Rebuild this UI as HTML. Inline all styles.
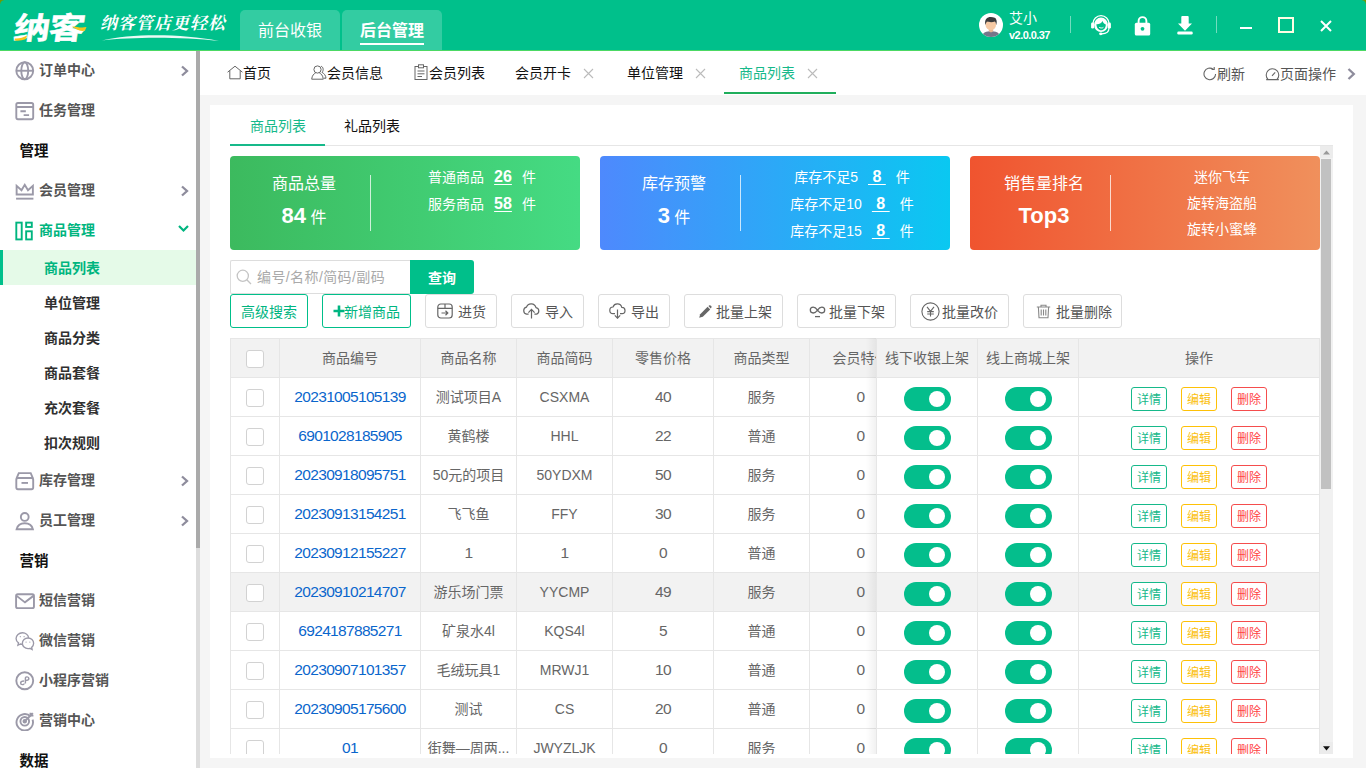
<!DOCTYPE html>
<html lang="zh-CN">
<head>
<meta charset="utf-8">
<title>纳客 - 商品列表</title>
<style>
*{box-sizing:border-box;margin:0;padding:0}
html,body{width:1366px;height:768px;overflow:hidden;background:#f5f5f5}
body{font-family:"Liberation Sans","Noto Sans CJK SC",sans-serif;font-size:14px;color:#333;position:relative}
.abs{position:absolute}
/* header */
#hd{position:absolute;left:0;top:0;width:1366px;height:51px;background:#00c08b;border-bottom:1px solid #4cd964}
#logo{position:absolute;left:14px;top:6px;font-size:30.5px;font-weight:700;-webkit-text-stroke:.5px #fff;color:#fff;letter-spacing:-1px;line-height:44px;white-space:nowrap;transform-origin:0 50%;transform:scaleX(1.19) skewX(-7deg)}
#slogan{position:absolute;left:100px;top:11px;font-family:"Liberation Serif","Noto Serif CJK SC",serif;font-style:italic;font-weight:700;font-size:17px;letter-spacing:1px;color:#fff;line-height:26px;white-space:nowrap}
.htab{position:absolute;top:10px;height:40px;width:100px;background:rgba(255,255,255,.2);border-radius:5px 5px 0 0;color:#fff;font-size:16px;line-height:42px;text-align:center}
.htab u{text-decoration:none;display:inline-block;line-height:22px;padding-bottom:1px;border-bottom:2px solid #fff}
#user{position:absolute;left:1009px;top:8px;color:#fff;line-height:20px}
#user b{display:block;font-size:11px;letter-spacing:-.55px;line-height:15px;margin-top:0}
.vsep{position:absolute;top:16px;width:1px;height:17px;background:rgba(255,255,255,.45)}
/* sidebar */
#sb{position:absolute;left:0;top:51px;width:196px;height:717px;background:#fff;overflow:hidden}
#sbbar{position:absolute;left:196px;top:51px;width:4px;height:717px;background:#ddd}
#sbbar i{position:absolute;left:0;top:0;width:4px;height:497px;background:#aaa}
.mi{position:absolute;left:0;width:196px;height:40px;line-height:40px;padding-left:39px;font-weight:bold;color:#555;font-size:14px}
.mi svg{position:absolute}
.mi svg:not(.chev){left:15px;top:11px;width:19.5px;height:19.5px}
.mi .chev{position:absolute;left:180px;top:13.5px}
.mh{position:absolute;left:19.5px;height:40px;line-height:42px;font-weight:bold;color:#111;font-size:14.5px}
.si{position:absolute;left:0;width:196px;height:35px;line-height:37px;padding-left:44px;font-weight:bold;color:#303030;font-size:14px}
.si.on{background:#e5fae8;color:#00b57f;border-left:3px solid #00c08b;padding-left:41px}

/* tab bar */
#tb{position:absolute;left:200px;top:51px;width:1166px;height:44px;background:#fff}
.tab{position:absolute;top:0;height:44px;line-height:45px;font-size:14px;color:#111;white-space:nowrap}
.tab svg{position:absolute}
.tab.on{color:#16b98a}
.tx{position:absolute;top:17px;width:11px;height:11px}
#tabline{position:absolute;left:524px;top:41px;width:112px;height:2px;background:#1fae5c}
.tab.tr{color:#555;line-height:46px}
/* main card */
#card{position:absolute;left:210px;top:105px;width:1143px;height:653px;background:#fff}
.it{position:absolute;top:0;height:41px;line-height:43px;font-size:14px;color:#111}
#itline{position:absolute;left:20px;top:40px;width:1103px;height:1px;background:#e6e6e6}
#iton{position:absolute;left:20px;top:39px;width:95px;height:2px;background:#16b98a}
#scroll{position:absolute;left:20px;top:41px;width:1090px;height:608px;overflow:hidden}
#vs{position:absolute;left:1110px;top:41px;width:13px;height:608px;background:#f1f1f1}
#vs:before,#vs:after{content:"";position:absolute;left:0;width:13px;height:12px;background:#ececec}
#vs:before{top:0}#vs:after{bottom:0}
#vs i{position:absolute;left:1px;top:13px;width:10px;height:330px;background:#c1c1c1}
/* stat */
.st{position:absolute;top:10px;width:350px;height:94px;border-radius:4px;color:#fff}
.st .t{position:absolute;left:4px;width:140px;text-align:center;top:14px;font-size:16px;line-height:28px}
.st .n{position:absolute;left:4px;width:140px;text-align:center;top:44px;font-size:16px;line-height:32px}
.st .n b{font-size:22px}
.st .dv{position:absolute;left:140px;top:19px;width:1px;height:56px;background:rgba(255,255,255,.75)}
.st .r{position:absolute;left:152px;width:200px;text-align:center;font-size:14px;line-height:20px;white-space:nowrap}
.st .r b{font-size:16px;text-decoration:underline;margin:0 10px;text-underline-offset:2px}
.st .r b.w{margin:0 10px}
/* search */
#sin{position:absolute;left:0;top:114px;width:180px;height:34px;border:1px solid #ddd;border-right:0;border-radius:2px 0 0 2px;padding-left:26px;line-height:33px;color:#aaa;font-size:14px;white-space:nowrap;letter-spacing:.4px}
#sbtn{position:absolute;left:180px;top:114px;width:64px;height:34px;background:#00bf8a;border-radius:0 3px 3px 0;color:#fff;text-align:center;line-height:37px;font-size:14px;font-weight:bold}
.bt{position:absolute;top:148px;height:34px;border:1px solid #ddd;border-radius:3px;background:#fff;color:#555;font-size:14px;line-height:35px;white-space:nowrap}
.bt.g{border-color:#00bf8a;color:#00b581}
.bt span{position:absolute;top:0}
.bt svg{position:absolute}

/* table */
#tbl{position:absolute;left:0;top:192px;border-collapse:separate;border-spacing:0;table-layout:fixed;width:682px;border-top:1px solid #e6e6e6;border-left:1px solid #e6e6e6;font-size:14px;color:#666}
#tbl td,#tbl th,#fx td,#fx th{height:39px;border-right:1px solid #e6e6e6;border-bottom:1px solid #e6e6e6;text-align:center;font-weight:normal;white-space:nowrap;overflow:hidden;padding:0;line-height:38px}
#tbl th,#fx th{background:#f2f2f2}
#tbl tr.hv td,#fx tr.hv td{background:#f2f2f2}
#tbl a{color:#0a66cc;text-decoration:none}
#tbl .n{font-size:15.5px;letter-spacing:-.67px}
.cb{display:inline-block;width:18px;height:18px;border:1px solid #d2d2d2;border-radius:3px;background:#fff;vertical-align:middle;margin-top:-1px}
#fx{position:absolute;left:646px;top:192px;border-collapse:separate;border-spacing:0;table-layout:fixed;width:444px;border-top:1px solid #e6e6e6;border-left:1px solid #e6e6e6;font-size:14px;color:#666;background:#fff}
#fxs{position:absolute;left:636px;top:192px;width:10px;height:420px;background:linear-gradient(90deg,rgba(0,0,0,0),rgba(0,0,0,.055))}
.sw{display:inline-block;width:47px;height:24px;border-radius:12px;background:#04be8c;position:relative;vertical-align:middle;margin-top:1px}
.sw i{position:absolute;left:25px;top:4px;width:16px;height:16px;border-radius:50%;background:#fff}
.ob{display:inline-block;width:36px;height:24px;border:1px solid;border-radius:3px;font-size:12px;line-height:25px;vertical-align:middle;margin:1px 7px 0;background:#fff}
.ob.a{color:#16b98a;border-color:#16b98a}.ob.b{color:#fbbf10;border-color:#fec107}.ob.c{color:#f44;border-color:#f54d4d}
</style>
</head>
<body>
<div id="hd">
  <div id="logo">纳客</div>
  <svg class="abs" style="left:14px;top:24px" width="74" height="18" viewBox="0 0 74 18"><path d="M1 14.5C5 14.8 9 13.8 13 11.5L12 15C8 16.8 4 16.8 0.5 16.5Z" fill="#f6c51c"/><path d="M58 2.5C62 2 66 4.5 72.5 3L71 6.5C66 8 62 5 58 2.5Z" fill="#f6c51c"/></svg>
  <div id="slogan">纳客管店更轻松</div>
  <svg class="abs" style="left:101px;top:34px" width="120" height="8" viewBox="0 0 120 8"><path d="M1 6.5C30 -.5 80 -.5 118 7C80 2.6 30 3 1 6.5Z" fill="#fff" opacity=".92"/></svg>
  <div class="htab" style="left:240px">前台收银</div>
  <div class="htab" style="left:342px;font-weight:bold"><u>后台管理</u></div>
  <div id="user">艾小<b>v2.0.0.37</b></div>

  <svg class="abs" style="left:979px;top:13px" width="24" height="24" viewBox="0 0 24 24"><defs><clipPath id="avc"><circle cx="12" cy="12" r="12"/></clipPath></defs><circle cx="12" cy="12" r="12" fill="#fff"/><g clip-path="url(#avc)"><path d="M2.5 26C2.5 19.5 7 18.2 12 18.2S21.5 19.5 21.5 26Z" fill="#76768a"/><path d="M9.8 15H14.2V18.3L12 19.6L9.8 18.3Z" fill="#eab894"/><ellipse cx="11.8" cy="11.6" rx="5.3" ry="5.6" fill="#f6c9a4"/><path d="M6.4 12C5.2 6.5 8 4 11.8 4C15 4 17.2 5 17.2 6.6C18 8 17.8 10.4 17.2 12C16.8 10.4 16.6 9.2 15.8 8.6C13.5 9.6 9.5 9.2 8 8.6C7.2 9.4 6.8 10.6 6.4 12Z" fill="#3a3a3c"/></g></svg>
  <svg class="abs" style="left:1090px;top:14px" width="22" height="22" viewBox="0 0 22 22" fill="none"><path d="M3 11V9.6A8 8 0 0 1 19 9.6V11" stroke="#fff" stroke-width="1.3"/><ellipse cx="11" cy="10.8" rx="6.9" ry="7.3" fill="#fff"/><path d="M6.4 10.2C8.4 10.6 11.2 9.4 12.6 7C13 8.6 14.4 10 15.8 10.4C15.8 13.8 14 16.2 11.2 16.2S6.5 13.6 6.4 10.2Z" fill="#00c08b"/><path d="M9.2 13.3C10 14.2 12.6 14.2 13.4 13.3" stroke="#fff" stroke-width="1"/><rect x="1.1" y="8.6" width="3" height="6" rx="1.4" fill="#fff"/><rect x="17.9" y="8.6" width="3" height="6" rx="1.4" fill="#fff"/><path d="M19 14C19 18 15.6 19.8 11.6 19.8" stroke="#fff" stroke-width="1.2"/><ellipse cx="10.8" cy="19.8" rx="1.7" ry="1.4" fill="#fff"/></svg>
  <svg class="abs" style="left:1134px;top:15px" width="17" height="21" viewBox="0 0 17 21"><path d="M4.6 9V6A3.9 3.9 0 0 1 12.4 6V9" fill="none" stroke="#fff" stroke-width="1.9"/><rect x=".8" y="7.8" width="15.4" height="12.8" rx="1.6" fill="#fff"/><circle cx="8.5" cy="13.8" r="1.9" fill="#00c08b"/></svg>
  <svg class="abs" style="left:1177px;top:16px" width="16" height="19" viewBox="0 0 16 19"><path d="M4.3 1Q4.3 0 5.3 0H10.7Q11.7 0 11.7 1V7.5H15L8 14.8L1 7.5H4.3Z" fill="#fff"/><rect x=".3" y="15.6" width="15.4" height="2.9" rx="1.2" fill="#fff"/></svg>
  <div class="abs" style="left:1240px;top:27px;width:12px;height:2px;background:#fff"></div>
  <div class="abs" style="left:1278px;top:17px;width:16px;height:16px;border:2px solid #fffde3"></div>
  <svg class="abs" style="left:1320px;top:20px" width="12" height="12" viewBox="0 0 12 12"><path d="M1 1L11 11M11 1L1 11" stroke="#fff" stroke-width="2" fill="none"/></svg>
  <div class="vsep" style="left:1070px"></div>
  <div class="vsep" style="left:1216px"></div>
</div>
<div class="abs" style="left:1362px;top:0;width:4px;height:4px;background:radial-gradient(circle at 0 100%,rgba(0,0,0,0) 3.2px,#6f9a05 4.2px)"></div>
<div class="abs" style="left:0;top:0;width:4px;height:4px;background:radial-gradient(circle at 100% 100%,rgba(0,0,0,0) 3.2px,#6f9a05 4.2px)"></div>
<div id="sb">
<div class="mi" style="top:-1px"><svg width="18" height="18" viewBox="0 0 18 18" fill="none" stroke="#9b99a8" stroke-width="1.75"><circle cx="9" cy="9" r="7.8" /><ellipse cx="9" cy="9" rx="3.2" ry="7.8"/><path d="M1.2 9H16.8"/></svg>订单中心<svg class="chev" width="9" height="14" viewBox="0 0 9 14"><path d="M2 2.5 L7 7 L2 11.5" fill="none" stroke="#8e8c9c" stroke-width="2.3"/></svg></div>
<div class="mi" style="top:39px"><svg width="18" height="18" viewBox="0 0 18 18" fill="none" stroke="#9b99a8" stroke-width="1.75"><rect x="1.2" y="1.8" width="15.6" height="15" rx="1.5"/><path d="M1.2 5.6H16.8M5 9.4H10M8 13H13" /></svg>任务管理</div>
<div class="mh" style="top:79px">管理</div>
<div class="mi" style="top:119px"><svg width="18" height="18" viewBox="0 0 18 18" fill="none" stroke="#9b99a8" stroke-width="1.75"><path d="M1.5 12.5V4.5L6 8.5L9 3.5L12 8.5L16.5 4.5V12.5Z"/><path d="M1 16.3H17"/></svg>会员管理<svg class="chev" width="9" height="14" viewBox="0 0 9 14"><path d="M2 2.5 L7 7 L2 11.5" fill="none" stroke="#8e8c9c" stroke-width="2.3"/></svg></div>
<div class="mi" style="top:159px;color:#00b57f"><svg width="18" height="18" viewBox="0 0 18 18" fill="none" stroke="#00b57f" stroke-width="1.75"><rect x="1.2" y="1.5" width="5" height="15.5"/><rect x="10.3" y="1.5" width="5.2" height="4"/><rect x="10.3" y="9.5" width="5.2" height="7.5"/></svg>商品管理<svg class="chev" style="top:14px;left:177px" width="13" height="9" viewBox="0 0 13 9"><path d="M2 2 L6.5 6.5 L11 2" fill="none" stroke="#00b57f" stroke-width="2.2"/></svg></div>
<div class="si on" style="top:199px">商品列表</div>
<div class="si" style="top:234px">单位管理</div>
<div class="si" style="top:269px">商品分类</div>
<div class="si" style="top:304px">商品套餐</div>
<div class="si" style="top:339px">充次套餐</div>
<div class="si" style="top:374px">扣次规则</div>
<div class="mi" style="top:409px"><svg width="18" height="18" viewBox="0 0 18 18" fill="none" stroke="#9b99a8" stroke-width="1.75"><path d="M1.5 6.5 L3.5 2H14.5L16.5 6.5"/><rect x="1.2" y="6.5" width="15.6" height="10.3" rx="1.5"/><path d="M6 11H12"/></svg>库存管理<svg class="chev" width="9" height="14" viewBox="0 0 9 14"><path d="M2 2.5 L7 7 L2 11.5" fill="none" stroke="#8e8c9c" stroke-width="2.3"/></svg></div>
<div class="mi" style="top:449px"><svg width="18" height="18" viewBox="0 0 18 18" fill="none" stroke="#9b99a8" stroke-width="1.75"><circle cx="9" cy="5.5" r="3.6"/><path d="M1.5 16.8C2.5 12.5 5 11.3 9 11.3S15.5 12.5 16.5 16.8Z"/></svg>员工管理<svg class="chev" width="9" height="14" viewBox="0 0 9 14"><path d="M2 2.5 L7 7 L2 11.5" fill="none" stroke="#8e8c9c" stroke-width="2.3"/></svg></div>
<div class="mh" style="top:489px">营销</div>
<div class="mi" style="top:529px"><svg width="18" height="18" viewBox="0 0 18 18" fill="none" stroke="#9b99a8" stroke-width="1.75"><rect x="1" y="3" width="16.5" height="12.8" rx="1.5"/><path d="M1.5 4.5L9.2 10.5L17 4.5"/></svg>短信营销</div>
<div class="mi" style="top:569px"><svg width="18" height="18" viewBox="0 0 18 18" fill="none" stroke="#9b99a8" stroke-width="1.25"><path d="M12.6 6.3C12.2 3.6 9.8 1.6 6.9 1.6C3.6 1.6 1 4 1 6.9C1 8.6 1.9 10.1 3.2 11L2.7 13.2L5 12C5.6 12.2 6.2 12.3 6.9 12.3"/><path d="M17.2 11.4C17.2 8.7 14.9 6.5 12 6.5S6.8 8.7 6.8 11.4S9.1 16.3 12 16.3C12.6 16.3 13.2 16.2 13.8 16L15.8 17L15.4 15.1C16.5 14.2 17.2 12.9 17.2 11.4Z" fill="#fff"/><circle cx="10.2" cy="10.2" r=".55" fill="#9b99a8" stroke="none"/><circle cx="13.7" cy="10.2" r=".55" fill="#9b99a8" stroke="none"/><circle cx="4.9" cy="5.2" r=".55" fill="#9b99a8" stroke="none"/><circle cx="8.4" cy="5.2" r=".55" fill="#9b99a8" stroke="none"/></svg>微信营销</div>
<div class="mi" style="top:609px"><svg width="18" height="18" viewBox="0 0 18 18" fill="none" stroke="#9b99a8" stroke-width="1.75"><circle cx="9" cy="9" r="7.8"/><path d="M9.6 6.5C9.6 5 12.8 5 12.8 7C12.8 8.6 10.5 8.8 9.6 8.8 M8.4 11.5C8.4 13 5.2 13 5.2 11C5.2 9.4 7.5 9.2 8.4 9.2 M9.6 6.5V11.5" stroke-width="1.3"/></svg>小程序营销</div>
<div class="mi" style="top:649px"><svg width="18" height="18" viewBox="0 0 18 18" fill="none" stroke="#9b99a8" stroke-width="1.75"><path d="M14.5 5.2A7.6 7.6 0 1 0 16.2 8"/><circle cx="9" cy="9.5" r="4"/><circle cx="9" cy="9.5" r="1.2" fill="#9b99a8"/><path d="M9.5 9L16.5 2M14.3 1.5V4.3H17"/></svg>营销中心</div>
<div class="mh" style="top:689px">数据</div>
</div>
<div id="sbbar"><i></i></div>

<div id="tb">
  <div class="tab" style="left:43px"><svg style="left:-16px;top:14px" width="16" height="15" viewBox="0 0 16 15" fill="none" stroke="#666" stroke-width="1"><path d="M.6 7.2L8 1.2L15.4 7.2M2.8 5.6V13.8H13.2V5.6"/></svg>首页</div>
  <div class="tab" style="left:127px"><svg style="left:-16px;top:14px" width="16" height="15" viewBox="0 0 16 15" fill="none" stroke="#666" stroke-width="1"><circle cx="6.5" cy="4.5" r="3.6"/><path d="M.7 14.2C1 10.5 3 8.6 4.6 8M8.4 8C10 8.6 12 10.5 12.3 14.2H.7"/><path d="M10 1.3C12.3 1.6 13 5.5 11 7.4C13.2 8.4 14.8 10.6 15 13.2H13"/></svg>会员信息</div>
  <div class="tab" style="left:229px"><svg style="left:-15px;top:13px" width="14" height="16" viewBox="0 0 14 16" fill="none" stroke="#666" stroke-width="1"><rect x="1" y="2.5" width="12" height="13"/><rect x="4.5" y=".8" width="5" height="3" fill="#fff"/><path d="M3.5 7H10.5M3.5 9.8H10.5M3.5 12.5H8"/></svg>会员列表</div>
  <div class="tab" style="left:315px">会员开卡</div><svg class="tx" style="left:383px" viewBox="0 0 11 11"><path d="M1 1L10 10M10 1L1 10" stroke="#bbb" stroke-width="1.1" fill="none"/></svg>
  <div class="tab" style="left:427px">单位管理</div><svg class="tx" style="left:495px" viewBox="0 0 11 11"><path d="M1 1L10 10M10 1L1 10" stroke="#bbb" stroke-width="1.1" fill="none"/></svg>
  <div class="tab on" style="left:539px">商品列表</div><svg class="tx" style="left:607px" viewBox="0 0 11 11"><path d="M1 1L10 10M10 1L1 10" stroke="#bbb" stroke-width="1.1" fill="none"/></svg>
  <div id="tabline"></div>
  <div class="tab tr" style="left:1017px"><svg style="left:-14px;top:16px" width="14" height="14" viewBox="0 0 14 14" fill="none" stroke="#666" stroke-width="1.1"><path d="M12.6 7A5.8 5.8 0 1 1 10.2 2.2"/><path d="M8.6 2.5H11.2V0"/></svg>刷新</div>
  <div class="tab tr" style="left:1080px"><svg style="left:-15px;top:16px" width="15" height="14" viewBox="0 0 15 14" fill="none" stroke="#666" stroke-width="1.1"><path d="M3 12.4A6.3 6.3 0 1 1 12 12.4M1.2 12.6H13.8" /><path d="M7 8.8L10.2 5.4"/></svg>页面操作</div>
  <svg class="abs" style="left:1147px;top:17px" width="9" height="12" viewBox="0 0 9 12"><path d="M1.5 1L6.8 6L1.5 11" fill="none" stroke="#8e8c9c" stroke-width="2.3"/></svg>
</div>
<div id="card">
  <div class="it" style="left:40px;color:#16b98a">商品列表</div>
  <div class="it" style="left:134px">礼品列表</div>
  <div id="itline"></div><div id="iton"></div>
  <div id="scroll">
    <div class="st" style="left:0;background:linear-gradient(90deg,#3cba5e,#45db83)">
      <div class="t">商品总量</div><div class="n"><b>84</b> 件</div><div class="dv"></div>
      <div class="r" style="top:11px">普通商品<b>26</b>件</div>
      <div class="r" style="top:38px">服务商品<b>58</b>件</div>
    </div>
    <div class="st" style="left:370px;background:linear-gradient(90deg,#4e89fd,#0ac8f1)">
      <div class="t">库存预警</div><div class="n"><b>3</b> 件</div><div class="dv"></div>
      <div class="r" style="top:11px">库存不足5<b class="w">&nbsp;8&nbsp;</b>件</div>
      <div class="r" style="top:38px">库存不足10<b class="w">&nbsp;8&nbsp;</b>件</div>
      <div class="r" style="top:65px">库存不足15<b class="w">&nbsp;8&nbsp;</b>件</div>
    </div>
    <div class="st" style="left:740px;background:linear-gradient(90deg,#f0542f,#f0905c)">
      <div class="t">销售量排名</div><div class="n"><b>Top3</b></div><div class="dv"></div>
      <div class="r" style="top:11px">迷你飞车</div>
      <div class="r" style="top:37px">旋转海盗船</div>
      <div class="r" style="top:63px">旋转小蜜蜂</div>
    </div>
    <div id="sin"><svg class="abs" style="left:5px;top:8px" width="16" height="16" viewBox="0 0 16 16" fill="none" stroke="#c4c4c4" stroke-width="1.3"><circle cx="6.8" cy="6.8" r="5.6"/><path d="M10.8 10.8L15 15"/></svg>编号/名称/简码/副码</div>
    <div id="sbtn">查询</div>
    <div class="bt g" style="left:0;width:78px"><span style="left:10px">高级搜索</span></div>
    <div class="bt g" style="left:92px;width:89px"><svg style="left:10px;top:10px" width="12" height="12" viewBox="0 0 12 12"><path d="M6 .5V11.5M.5 6H11.5" stroke="#00b581" stroke-width="2.6"/></svg><span style="left:21px">新增商品</span></div>
    <div class="bt" style="left:195px;width:72px"><svg style="left:11px;top:8px" width="16" height="16" viewBox="0 0 16 16" fill="none" stroke="#666" stroke-width="1.2"><rect x=".8" y="1" width="14.4" height="14" rx="3"/><path d="M.8 5.4H15.2M8 1V5.4M4.5 10H10.5M8.5 7.8L10.8 10L8.5 12.2"/></svg><span style="left:32px">进货</span></div>
    <div class="bt" style="left:281px;width:73px"><svg style="left:10px;top:8px" width="19" height="16" viewBox="0 0 19 16" fill="none" stroke="#666" stroke-width="1.2"><path d="M6.6 11.2H4.6A3.6 3.6 0 0 1 4.4 4.2A5 5 0 0 1 14 4.6A3.4 3.4 0 0 1 14.4 11.2H12.4"/><path d="M9.5 15.5V6.6M6.4 9.6L9.5 6.4L12.6 9.6"/></svg><span style="left:33px">导入</span></div>
    <div class="bt" style="left:368px;width:72px"><svg style="left:10px;top:8px" width="17" height="16" viewBox="0 0 17 16" fill="none" stroke="#666" stroke-width="1.2"><path d="M6 10.6H4.2A3.3 3.3 0 0 1 4 4A4.6 4.6 0 0 1 12.8 4.4A3.1 3.1 0 0 1 13 10.6H11"/><path d="M8.5 6.4V15M5.8 12.4L8.5 15.2L11.2 12.4"/></svg><span style="left:32px">导出</span></div>
    <div class="bt" style="left:454px;width:99px"><svg style="left:13px;top:10px" width="14" height="14" viewBox="0 0 14 14"><path d="M1.2 12.8L2.2 9.2L9.6 1.8L12.2 4.4L4.8 11.8Z" fill="#666"/><path d="M10.4 1L11.2 .4C11.8 0 12.4 .2 13 .8S13.9 2 13.4 2.6L12.8 3.4Z" fill="#666"/></svg><span style="left:31px">批量上架</span></div>
    <div class="bt" style="left:567px;width:99px"><svg style="left:11px;top:11px" width="17" height="12" viewBox="0 0 17 12" fill="none" stroke="#666" stroke-width="1.3"><path d="M8.5 4.2C7.4 2.6 6 1.2 4.2 1.2A2.9 2.9 0 0 0 4.2 7C6 7 7.4 5.8 8.5 4.2ZM8.5 4.2C9.6 5.8 11 7 12.8 7A2.9 2.9 0 0 0 12.8 1.2C11 1.2 9.6 2.6 8.5 4.2Z"/><path d="M6 10.6H11"/></svg><span style="left:31px">批量下架</span></div>
    <div class="bt" style="left:680px;width:99px"><svg style="left:10px;top:7px" width="19" height="19" viewBox="0 0 19 19" fill="none" stroke="#666" stroke-width="1.1"><circle cx="9.5" cy="9.5" r="8.6"/><path d="M6 4.8L9.5 9.4L13 4.8M9.5 9.4V14.6M6.2 9.6H12.8M6.2 12H12.8"/></svg><span style="left:31px">批量改价</span></div>
    <div class="bt" style="left:793px;width:99px"><svg style="left:12px;top:9px" width="15" height="15" viewBox="0 0 15 15" fill="none" stroke="#888" stroke-width="1.1"><path d="M.8 3H14.2M5 3V1.2H10V3M2.4 3.2L3 13.8H12L12.6 3.2"/><path d="M5.2 5.5V11.5M7.5 5.5V11.5M9.8 5.5V11.5"/></svg><span style="left:32px">批量删除</span></div>
    <table id="tbl"><colgroup><col style="width:49px"><col style="width:141px"><col style="width:96px"><col style="width:96px"><col style="width:101px"><col style="width:96px"><col style="width:102px"></colgroup>
<tr><th><span class="cb"></span></th><th>商品编号</th><th>商品名称</th><th>商品简码</th><th>零售价格</th><th>商品类型</th><th>会员特价</th></tr>
<tr><td><span class="cb"></span></td><td class="n"><a>20231005105139</a></td><td>测试项目A</td><td>CSXMA</td><td class="n">40</td><td>服务</td><td class="n">0</td></tr>
<tr><td><span class="cb"></span></td><td class="n"><a>6901028185905</a></td><td>黄鹤楼</td><td>HHL</td><td class="n">22</td><td>普通</td><td class="n">0</td></tr>
<tr><td><span class="cb"></span></td><td class="n"><a>20230918095751</a></td><td>50元的项目</td><td>50YDXM</td><td class="n">50</td><td>服务</td><td class="n">0</td></tr>
<tr><td><span class="cb"></span></td><td class="n"><a>20230913154251</a></td><td>飞飞鱼</td><td>FFY</td><td class="n">30</td><td>服务</td><td class="n">0</td></tr>
<tr><td><span class="cb"></span></td><td class="n"><a>20230912155227</a></td><td class="n">1</td><td class="n">1</td><td class="n">0</td><td>普通</td><td class="n">0</td></tr>
<tr class="hv"><td><span class="cb"></span></td><td class="n"><a>20230910214707</a></td><td>游乐场门票</td><td>YYCMP</td><td class="n">49</td><td>服务</td><td class="n">0</td></tr>
<tr><td><span class="cb"></span></td><td class="n"><a>6924187885271</a></td><td>矿泉水4l</td><td>KQS4l</td><td class="n">5</td><td>普通</td><td class="n">0</td></tr>
<tr><td><span class="cb"></span></td><td class="n"><a>20230907101357</a></td><td>毛绒玩具1</td><td>MRWJ1</td><td class="n">10</td><td>普通</td><td class="n">0</td></tr>
<tr><td><span class="cb"></span></td><td class="n"><a>20230905175600</a></td><td>测试</td><td>CS</td><td class="n">20</td><td>普通</td><td class="n">0</td></tr>
<tr><td><span class="cb"></span></td><td class="n"><a>01</a></td><td>街舞—周两...</td><td>JWYZLJK</td><td class="n">0</td><td>服务</td><td class="n">0</td></tr>
</table>
<div id="fxs"></div>
<table id="fx"><colgroup><col style="width:101px"><col style="width:101px"><col style="width:241px"></colgroup>
<tr><th>线下收银上架</th><th>线上商城上架</th><th>操作</th></tr>
<tr><td><span class="sw"><i></i></span></td><td><span class="sw"><i></i></span></td><td><span class="ob a">详情</span><span class="ob b">编辑</span><span class="ob c">删除</span></td></tr>
<tr><td><span class="sw"><i></i></span></td><td><span class="sw"><i></i></span></td><td><span class="ob a">详情</span><span class="ob b">编辑</span><span class="ob c">删除</span></td></tr>
<tr><td><span class="sw"><i></i></span></td><td><span class="sw"><i></i></span></td><td><span class="ob a">详情</span><span class="ob b">编辑</span><span class="ob c">删除</span></td></tr>
<tr><td><span class="sw"><i></i></span></td><td><span class="sw"><i></i></span></td><td><span class="ob a">详情</span><span class="ob b">编辑</span><span class="ob c">删除</span></td></tr>
<tr><td><span class="sw"><i></i></span></td><td><span class="sw"><i></i></span></td><td><span class="ob a">详情</span><span class="ob b">编辑</span><span class="ob c">删除</span></td></tr>
<tr class="hv"><td><span class="sw"><i></i></span></td><td><span class="sw"><i></i></span></td><td><span class="ob a">详情</span><span class="ob b">编辑</span><span class="ob c">删除</span></td></tr>
<tr><td><span class="sw"><i></i></span></td><td><span class="sw"><i></i></span></td><td><span class="ob a">详情</span><span class="ob b">编辑</span><span class="ob c">删除</span></td></tr>
<tr><td><span class="sw"><i></i></span></td><td><span class="sw"><i></i></span></td><td><span class="ob a">详情</span><span class="ob b">编辑</span><span class="ob c">删除</span></td></tr>
<tr><td><span class="sw"><i></i></span></td><td><span class="sw"><i></i></span></td><td><span class="ob a">详情</span><span class="ob b">编辑</span><span class="ob c">删除</span></td></tr>
<tr><td><span class="sw"><i></i></span></td><td><span class="sw"><i></i></span></td><td><span class="ob a">详情</span><span class="ob b">编辑</span><span class="ob c">删除</span></td></tr>
</table>
  </div>
  <div id="vs"><i></i>
    <svg class="abs" style="left:3px;top:4px;z-index:2" width="7" height="5" viewBox="0 0 7 5"><path d="M0 4.5L3.5 .5L7 4.5Z" fill="#999"/></svg>
    <svg class="abs" style="left:3px;top:600px;z-index:2" width="7" height="5" viewBox="0 0 7 5"><path d="M0 .3L3.5 4.5L7 .3Z" fill="#111"/></svg>
  </div>
</div>
</body>
</html>
